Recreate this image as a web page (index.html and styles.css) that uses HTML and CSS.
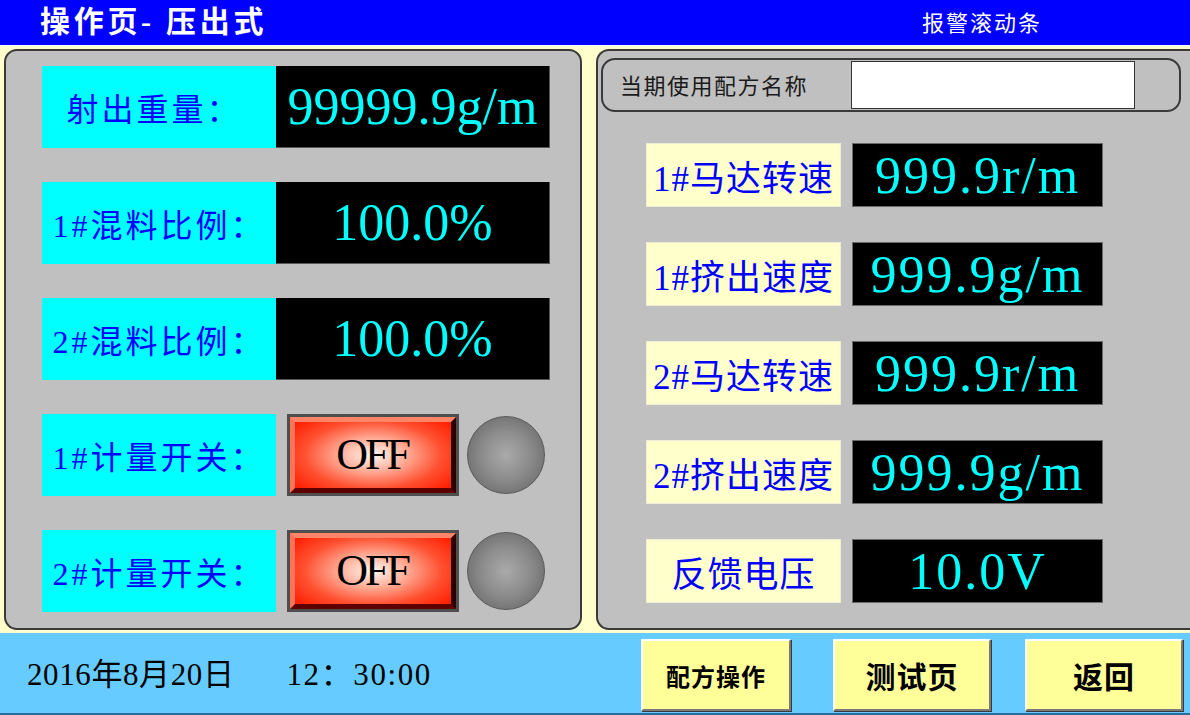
FILE: index.html
```html
<!DOCTYPE html>
<html lang="zh-CN">
<head>
<meta charset="utf-8">
<title>操作页- 压出式</title>
<link rel="stylesheet" href="styles.css">
</head>
<body>
<div class="screen">
  <header class="header">
    <div class="title">操作页- 压出式</div>
    <div class="alarm">报警滚动条</div>
  </header>
  <main class="main">
    <section class="panel panel-left">
      <div class="row">
        <div class="label cyan label-first">射出重量：</div>
        <div class="value">99999.9g/m</div>
      </div>
      <div class="row">
        <div class="label cyan">1#混料比例：</div>
        <div class="value">100.0%</div>
      </div>
      <div class="row">
        <div class="label cyan">2#混料比例：</div>
        <div class="value">100.0%</div>
      </div>
      <div class="row">
        <div class="label cyan">1#计量开关：</div>
        <div class="switch"><div class="switch-face">OFF</div></div>
        <div class="lamp"></div>
      </div>
      <div class="row">
        <div class="label cyan">2#计量开关：</div>
        <div class="switch"><div class="switch-face">OFF</div></div>
        <div class="lamp"></div>
      </div>
    </section>
    <section class="panel panel-right">
      <div class="recipe">
        <div class="recipe-label">当期使用配方名称</div>
        <div class="recipe-input"></div>
      </div>
      <div class="rows-right">
        <div class="rrow">
          <div class="rlabel">1#马达转速</div>
          <div class="rvalue">999.9r/m</div>
        </div>
        <div class="rrow">
          <div class="rlabel">1#挤出速度</div>
          <div class="rvalue">999.9g/m</div>
        </div>
        <div class="rrow">
          <div class="rlabel">2#马达转速</div>
          <div class="rvalue">999.9r/m</div>
        </div>
        <div class="rrow">
          <div class="rlabel">2#挤出速度</div>
          <div class="rvalue">999.9g/m</div>
        </div>
        <div class="rrow">
          <div class="rlabel">反馈电压</div>
          <div class="rvalue">10.0V</div>
        </div>
      </div>
    </section>
  </main>
  <footer class="footer">
    <div class="datetime">
      <span class="date">2016年8月20日</span>
      <span class="time">12：30:00</span>
    </div>
    <div class="buttons">
      <div class="btn btn-small">配方操作</div>
      <div class="btn">测试页</div>
      <div class="btn">返回</div>
    </div>
  </footer>
</div>
</body>
</html>
```

FILE: styles.css
```css
* { box-sizing: border-box; }
html, body {
  margin: 0;
  padding: 0;
  width: 1190px;
  height: 715px;
  overflow: hidden;
  background: #FFFFCC;
}
.screen {
  width: 1190px;
  height: 715px;
  display: flex;
  flex-direction: column;
  font-family: "Liberation Serif", "Noto Sans CJK SC", serif;
}
.header {
  height: 46px;
  background: #0000FF;
  border-bottom: 1px solid #FFFFFF;
  display: flex;
  align-items: center;
  color: #FFFFFF;
  flex: none;
}
.title {
  padding-left: 40px;
  font-size: 30px;
  font-weight: 700;
  letter-spacing: 3.7px;
  width: 922px;
  line-height: 42px;
  padding-bottom: 2px;
}
.alarm {
  font-family: "Noto Sans CJK SC", sans-serif;
  font-size: 22px;
  letter-spacing: 2px;
  line-height: 40px;
  padding-bottom: 4px;
}
.main {
  height: 587px;
  flex: none;
  display: flex;
  gap: 14px;
  padding: 3px 0 3px 4px;
}
.panel {
  background: #C0C0C0;
  border: 2px solid #3A3A3A;
  border-radius: 13px;
}
.panel-left {
  width: 578px;
  padding: 15px 0 0 36px;
  display: flex;
  flex-direction: column;
  gap: 34px;
}
.row {
  display: flex;
  align-items: center;
  height: 82px;
}
.label {
  width: 234px;
  height: 82px;
  display: flex;
  align-items: center;
  justify-content: center;
  color: #0000FF;
  font-size: 32px;
  letter-spacing: 3px;
}
.label-first {
  padding-right: 10px;
}
.cyan { background: #00FFFF; }
.value {
  width: 274px;
  height: 82px;
  background: #000000;
  color: #00FFFF;
  font-size: 52px;
  display: flex;
  align-items: center;
  justify-content: center;
  border-right: 1px solid #555;
  border-bottom: 1px solid #555;
}
.switch {
  margin-left: 11px;
  width: 172px;
  height: 82px;
  border: 3px solid #4E4E4E;
  background: #4E4E4E;
}
.switch-face {
  width: 100%;
  height: 100%;
  border-style: solid;
  border-width: 5px;
  border-color: #FF8468 #2A0000 #5E0000 #FF7458;
  background: radial-gradient(ellipse 65% 75% at 50% 50%, #FFF6F0 0%, #FFB4A0 30%, #FF5030 68%, #FF1E00 100%);
  display: flex;
  align-items: center;
  justify-content: center;
  color: #000;
  font-size: 44px;
  letter-spacing: -3px;
  line-height: 1;
  padding-right: 2px;
}
.lamp {
  margin-left: 8px;
  width: 78px;
  height: 78px;
  border-radius: 50%;
  border: 1px solid #5A5A5A;
  background: radial-gradient(circle at 50% 50%, #AAAAAA 0%, #8C8C8C 45%, #5E5E5E 100%);
}
.panel-right {
  flex: 1;
  border-right: none;
  border-radius: 13px 0 0 13px;
  padding: 7px 0 0 3px;
}
.recipe {
  width: 580px;
  height: 54px;
  border: 2px solid #3A3A3A;
  border-radius: 14px;
  display: flex;
  align-items: flex-start;
}
.recipe-label {
  width: 248px;
  padding-left: 17px;
  font-family: "Noto Sans CJK SC", sans-serif;
  font-size: 22px;
  letter-spacing: 1.5px;
  color: #1A1A1A;
  line-height: 48px;
}
.recipe-input {
  margin-top: 1px;
  width: 284px;
  height: 48px;
  background: #FFFFFF;
  border: 1px solid #333;
}
.rows-right {
  padding: 31px 0 0 45px;
  display: flex;
  flex-direction: column;
  gap: 35px;
}
.rrow {
  display: flex;
  gap: 11px;
  height: 64px;
}
.rlabel {
  width: 195px;
  height: 64px;
  background: #FFFFCC;
  border: 1px solid #EEEED8;
  color: #0000FF;
  font-size: 35px;
  letter-spacing: 1px;
  display: flex;
  align-items: center;
  justify-content: center;
}
.rvalue {
  width: 251px;
  height: 64px;
  background: #000;
  border: 1px solid #6A6A6A;
  color: #00FFFF;
  font-size: 52px;
  letter-spacing: 2px;
  display: flex;
  align-items: center;
  justify-content: center;
}
.footer {
  flex: 1;
  background: #66CCFF;
  border-bottom: 2px solid #2E6A9A;
  display: flex;
  align-items: center;
  justify-content: space-between;
  padding: 4px 7px 0 27px;
}
.datetime {
  font-size: 31px;
  letter-spacing: 0.6px;
  color: #000;
  display: flex;
  gap: 52px;
  padding-bottom: 8px;
}
.time {
  letter-spacing: 1.6px;
}
.buttons {
  display: flex;
  gap: 34px;
}
.btn {
  width: 158px;
  height: 72px;
  background: #FFFF99;
  border-style: solid;
  border-width: 2px;
  border-color: #FFFFFF #7A7A7A #7A7A7A #FFFFFF;
  box-shadow: 1px 1px 0 #3A3A3A;
  display: flex;
  align-items: center;
  justify-content: center;
  font-family: "Noto Sans CJK SC", sans-serif;
  font-weight: 700;
  font-size: 30px;
  letter-spacing: 1px;
  color: #000;
}
.btn-small {
  width: 150px;
  margin-right: 8px;
  font-size: 24px;
}
```
